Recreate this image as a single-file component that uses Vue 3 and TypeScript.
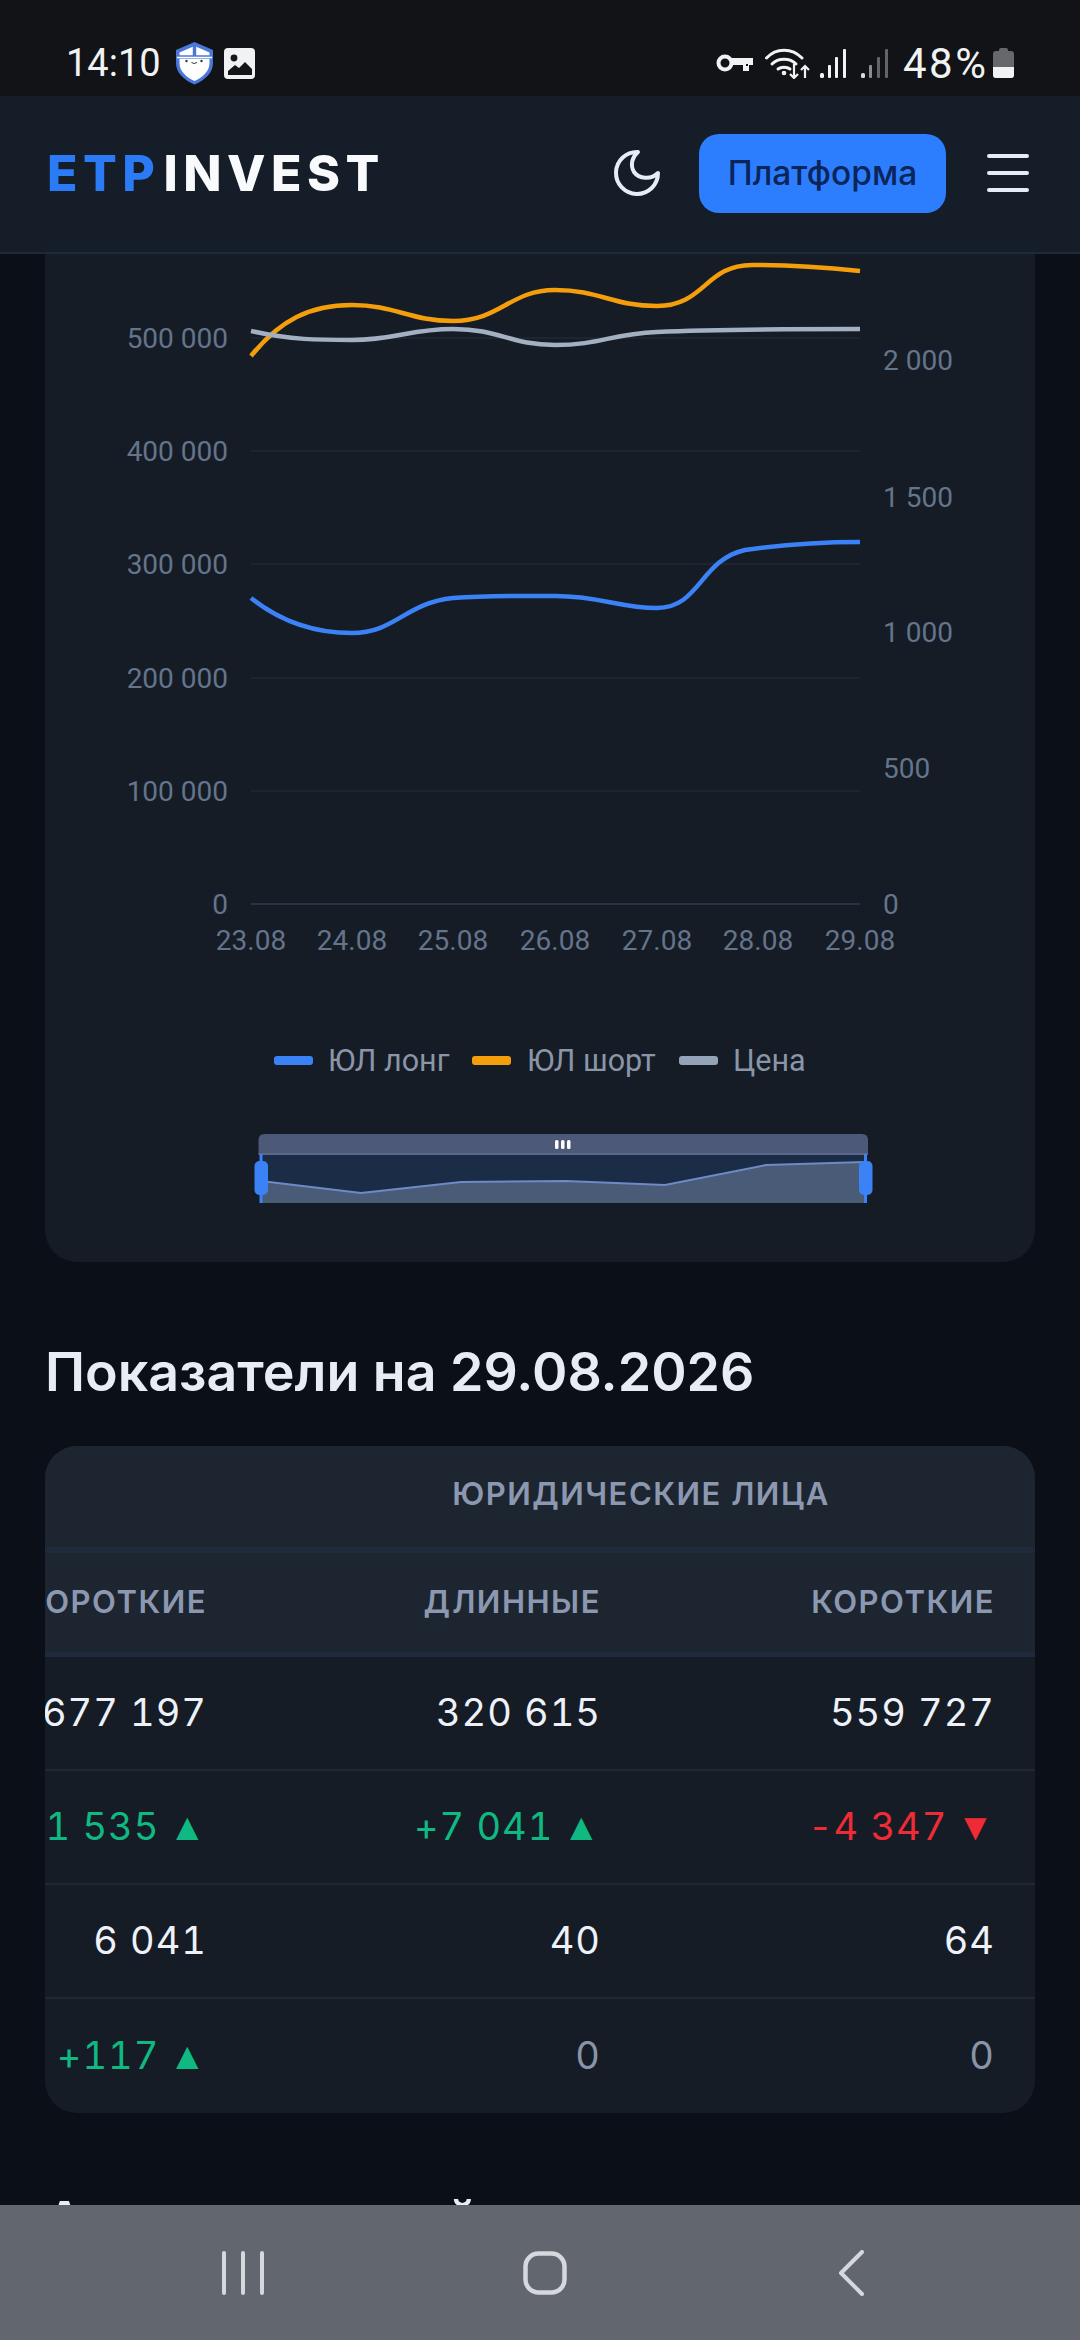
<script setup lang="ts">
interface Cell {
  text: string
  tone?: 'up' | 'down' | 'flat'
  arrow?: string
}

const leftTicks = [
  { y: 338, label: '500 000' },
  { y: 451, label: '400 000' },
  { y: 564, label: '300 000' },
  { y: 678, label: '200 000' },
  { y: 791, label: '100 000' },
  { y: 904, label: '0' }
]
const rightTicks = [
  { y: 360, label: '2 000' },
  { y: 497, label: '1 500' },
  { y: 632, label: '1 000' },
  { y: 768, label: '500' },
  { y: 904, label: '0' }
]
const dates = [
  { x: 251, label: '23.08' },
  { x: 352, label: '24.08' },
  { x: 453, label: '25.08' },
  { x: 555, label: '26.08' },
  { x: 657, label: '27.08' },
  { x: 758, label: '28.08' },
  { x: 860, label: '29.08' }
]
const legend = [
  { x: 274, textX: 328, color: '#3b82f6', label: 'ЮЛ лонг' },
  { x: 472, textX: 527, color: '#f59e0b', label: 'ЮЛ шорт' },
  { x: 679, textX: 733, color: '#94a3b8', label: 'Цена' }
]

const rows: Cell[][] = [
  [{ text: '677 197' }, { text: '320 615' }, { text: '559 727' }],
  [
    { text: '+1 535', tone: 'up', arrow: '▲' },
    { text: '+7 041', tone: 'up', arrow: '▲' },
    { text: '-4 347', tone: 'down', arrow: '▼' }
  ],
  [{ text: '6 041' }, { text: '40' }, { text: '64' }],
  [
    { text: '+117', tone: 'up', arrow: '▲' },
    { text: '0', tone: 'flat' },
    { text: '0', tone: 'flat' }
  ]
]
</script>

<template>
  <div class="screen">
    <div class="status-bar">
      <div class="status-left">
        <span class="status-text">14:10</span>
        <svg class="shield" width="39" height="44" viewBox="0 0 39 44">
          <path d="M19.5 1 L38 9 V22 C38 32 30 39 19.5 43.5 C9 39 1 32 1 22 V9 Z" fill="#4a78d8" />
          <path d="M19.5 5 L34.5 11.5 V22 C34.5 30 28 36 19.5 40 C11 36 4.5 30 4.5 22 V11.5 Z" fill="#fff" />
          <path d="M19.5 3 V16 M2 16 H37" stroke="#4a78d8" stroke-width="3.4" fill="none" />
          <path d="M2 16.5 H37" stroke="#fff" stroke-width="1.5" />
          <circle cx="11.5" cy="20" r="1.2" fill="#333" />
          <circle cx="26.5" cy="20" r="1.2" fill="#333" />
          <path d="M16.5 21.5 Q19 23.5 22 21.5" stroke="#333" stroke-width="1" fill="none" />
        </svg>
        <svg class="gallery" width="31" height="31" viewBox="0 0 31 31">
          <rect width="31" height="31" rx="4" fill="#f1f2f3" />
          <circle cx="10" cy="10" r="3.4" fill="#14161a" />
          <path d="M4 27 V23 L11 17 L15 20 L21 14 L28 21 V27 Z" fill="#14161a" />
        </svg>
      </div>
      <div class="status-right">
        <svg class="key" width="37" height="20" viewBox="0 0 37 20">
          <circle cx="9" cy="10" r="6.5" fill="none" stroke="#f1f2f3" stroke-width="4" />
          <path d="M15 5 H37 V12 H33 V18 H27 V12 H15 Z" fill="#f1f2f3" />
          <rect x="30" y="11" width="2" height="2" fill="#111317" />
        </svg>
        <svg class="wifi" width="45" height="32" viewBox="0 0 45 32">
          <path d="M1.5 11 C11 0.5 27 0.5 37 11" fill="none" stroke="#f1f2f3" stroke-width="3" stroke-linecap="round" />
          <path d="M7 17 C13 10.5 25 10.5 31 17" fill="none" stroke="#f1f2f3" stroke-width="3" stroke-linecap="round" />
          <path d="M13 22 C16 19.5 22 19.5 25 22" fill="none" stroke="#f1f2f3" stroke-width="3" stroke-linecap="round" />
          <circle cx="19" cy="26" r="2.3" fill="#f1f2f3" />
          <path d="M29 17 V31 M25 27 L29 31 L33 27 M40 31 V19 M36 23 L40 19 L44 23" fill="none" stroke="#f1f2f3" stroke-width="2.2" />
        </svg>
        <svg class="signal" width="26" height="29" viewBox="0 0 26 29">
          <rect x="0" y="24" width="4" height="5" rx="1.5" fill="#f1f2f3" />
          <rect x="8" y="16" width="3" height="13" rx="1" fill="#f1f2f3" />
          <rect x="15" y="8" width="3" height="21" rx="1" fill="#f1f2f3" />
          <rect x="23" y="0" width="3" height="29" rx="1" fill="#f1f2f3" />
        </svg>
        <svg class="signal second" width="27" height="29" viewBox="0 0 27 29">
          <rect x="0" y="24" width="4" height="5" rx="1.5" fill="#d8d9da" />
          <rect x="8" y="16" width="3" height="13" rx="1" fill="#8b8c8e" />
          <rect x="16" y="8" width="3" height="21" rx="1" fill="#636467" />
          <rect x="24" y="0" width="3" height="29" rx="1" fill="#636467" />
        </svg>
        <span class="status-text percent">48%</span>
        <svg class="battery" width="21" height="30" viewBox="0 0 21 30">
          <path d="M6 2 Q6 0 8 0 H13 Q15 0 15 2 V3 H18 Q21 3 21 6 V27 Q21 30 18 30 H3 Q0 30 0 27 V6 Q0 3 3 3 H6 Z" fill="#66686b" />
          <path d="M0 19 H21 V27 Q21 30 18 30 H3 Q0 30 0 27 Z" fill="#f1f2f3" />
        </svg>
      </div>
    </div>

    <header class="top-bar">
      <div class="logo"><span class="logo-accent">ETP</span><span>INVEST</span></div>
      <svg class="moon" width="48" height="48" viewBox="0 0 48 48">
        <path d="M25 3 A21 21 0 1 0 45 24 C38 31 26 30 21 23 C17 16 19 8 25 3 Z" fill="none" stroke="#e8edf5" stroke-width="4" stroke-linejoin="round" />
      </svg>
      <button class="platform-btn">Платформа</button>
      <div class="burger">
        <span></span>
        <span></span>
        <span></span>
      </div>
    </header>

    <main class="page">
      <section class="chart-card">
        <svg class="chart" width="990" height="1008" viewBox="45 254 990 1008">
          <line v-for="t in leftTicks" :key="t.y" x1="251" x2="860" :y1="t.y" :y2="t.y"
            :stroke="t.y === 904 ? '#2a3340' : '#1d2530'" stroke-width="2" />
          <text v-for="t in leftTicks" :key="t.label" x="228" :y="t.y + 10" text-anchor="end" class="axis">{{ t.label }}</text>
          <text v-for="t in rightTicks" :key="t.label" x="883" :y="t.y + 10" class="axis">{{ t.label }}</text>
          <text v-for="d in dates" :key="d.x" :x="d.x" y="950" text-anchor="middle" class="axis">{{ d.label }}</text>

          <path d="M251 356 C280 320 310 305 352 305 C395 305 410 321 453 321 C500 321 510 290 555 290 C600 290 612 306 657 306 C705 306 705 265 752 265 C790 265 830 268 860 271"
            fill="none" stroke="#f59e0b" stroke-width="4.5" />
          <path d="M251 331 C290 340 320 340 352 340 C395 340 410 329 453 329 C500 329 510 345 555 345 C600 345 610 334 657 332 C720 329 790 329 860 329"
            fill="none" stroke="#a3b0c2" stroke-width="4.5" />
          <path d="M251 598 C285 625 320 633 352 633 C395 633 405 603 453 598 C490 595 520 596 555 596 C600 596 620 608 657 608 C700 608 700 560 745 550 C780 545 820 542 860 542"
            fill="none" stroke="#3b82f6" stroke-width="4.5" />

          <g v-for="l in legend" :key="l.label">
            <rect :x="l.x" y="1056" width="39" height="9" rx="3" :fill="l.color" />
            <text :x="l.textX" y="1071" class="legend">{{ l.label }}</text>
          </g>

          <rect x="261" y="1154" width="604" height="49" fill="#1b2c47" />
          <path d="M261 1181 L361 1193 L461 1182 L566 1181 L665 1185 L766 1165 L865 1162 V1203 H261 Z" fill="#4a5b78" />
          <path d="M261 1181 L361 1193 L461 1182 L566 1181 L665 1185 L766 1165 L865 1162" fill="none" stroke="#6f8ac4" stroke-width="2" />
          <path d="M258.5 1154 V1140 Q258.5 1134 264.5 1134 H862 Q868 1134 868 1140 V1154 Z" fill="#4d5978" />
          <rect x="258.5" y="1153" width="609.5" height="2" fill="#5b678a" />
          <rect x="555" y="1140" width="3.5" height="9" rx="1.5" fill="#fff" />
          <rect x="561" y="1140" width="3.5" height="9" rx="1.5" fill="#fff" />
          <rect x="567" y="1140" width="3.5" height="9" rx="1.5" fill="#fff" />
          <rect x="259.5" y="1154" width="3" height="49" fill="#3b82f6" />
          <rect x="864" y="1154" width="3" height="49" fill="#3b82f6" />
          <rect x="254.5" y="1161" width="13.5" height="34" rx="5" fill="#3b82f6" />
          <rect x="859" y="1161" width="13.5" height="34" rx="5" fill="#3b82f6" />
        </svg>
      </section>

      <h2 class="section-title first">Показатели на 29.08.2026</h2>

      <section class="table-card">
        <div class="table-track">
          <div class="thead-row group-row">
            <div></div>
            <div class="group-cell">Юридические лица</div>
          </div>
          <div class="thead-row sub-row">
            <div class="head-cell">Короткие</div>
            <div class="head-cell">Длинные</div>
            <div class="head-cell">Короткие</div>
          </div>
          <div v-for="(row, i) in rows" :key="i" class="data-row">
            <div v-for="(cell, j) in row" :key="j" class="data-cell" :class="cell.tone">
              {{ cell.text }}<span v-if="cell.arrow" class="arrow">{{ cell.arrow }}</span>
            </div>
          </div>
        </div>
      </section>

      <h2 class="section-title">Анализ позиций</h2>
    </main>

    <nav class="nav-bar">
      <svg class="nav-recent" width="42" height="44" viewBox="0 0 42 44">
        <path d="M2 2 V42 M21 2 V42 M40 2 V42" stroke="#d5d8dd" stroke-width="4" stroke-linecap="round" fill="none" />
      </svg>
      <svg class="nav-home" width="44" height="44" viewBox="0 0 44 44">
        <rect x="2.5" y="2.5" width="39" height="39" rx="13" fill="none" stroke="#d5d8dd" stroke-width="4.5" />
      </svg>
      <svg class="nav-back" width="26" height="46" viewBox="0 0 26 46">
        <path d="M24 2 L3 23 L24 44" stroke="#d5d8dd" stroke-width="4" stroke-linecap="round" stroke-linejoin="round" fill="none" />
      </svg>
    </nav>
  </div>
</template>

<style scoped>
.screen {
  width: 1080px;
  height: 2340px;
  display: flex;
  flex-direction: column;
  overflow: hidden;
  background: #0b0f17;
  font-family: Inter, "Noto Sans", sans-serif;
}

.status-bar {
  height: 96px;
  flex: none;
  box-sizing: border-box;
  padding: 30px 66px 0 66px;
  display: flex;
  align-items: center;
  justify-content: space-between;
  background: #111317;
}

.status-left,
.status-right {
  display: flex;
  align-items: center;
}

.status-text {
  font-family: Roboto, sans-serif;
  font-size: 38px;
  color: #f1f2f3;
}

.shield {
  margin-left: 14px;
}

.gallery {
  margin-left: 10px;
}

.wifi {
  margin-left: 12px;
}

.signal {
  margin-left: 10px;
}

.signal.second {
  margin-left: 15px;
}

.percent {
  width: 83px;
  margin-left: 15px;
  font-size: 42px;
  letter-spacing: 2.5px;
  white-space: nowrap;
}

.battery {
  margin-left: 7px;
}

.top-bar {
  height: 158px;
  flex: none;
  box-sizing: border-box;
  padding: 0 51px 2px 47px;
  display: flex;
  align-items: center;
  background: #151d28;
  border-bottom: 2px solid #1e293b;
}

.logo {
  font-size: 50px;
  font-weight: 800;
  letter-spacing: 5.5px;
  color: #f8fafc;
}

.logo-accent {
  color: #2b7bf6;
  margin-right: 3px;
}

.moon {
  margin-left: auto;
}

.platform-btn {
  width: 247px;
  height: 79px;
  margin-left: 38px;
  border: none;
  border-radius: 20px;
  background: #2d7dff;
  color: #0a2559;
  font-family: Inter, sans-serif;
  font-size: 33.5px;
  font-weight: 500;
}

.burger {
  width: 42px;
  margin-left: 41px;
  display: flex;
  flex-direction: column;
  gap: 12.5px;
}

.burger span {
  height: 4.5px;
  border-radius: 3px;
  background: #e6ecf5;
}

.page {
  flex: 1;
  min-height: 0;
  overflow: hidden;
  box-sizing: border-box;
  padding: 0 45px;
}

.chart-card {
  height: 1008px;
  background: #151c26;
  border-radius: 0 0 32px 32px;
}

.chart {
  display: block;
}

.axis {
  font-family: Roboto, sans-serif;
  font-size: 28px;
  fill: #64748b;
}

.legend {
  font-family: Roboto, sans-serif;
  font-size: 30.5px;
  fill: #8a96a8;
}

.section-title {
  margin: 0;
  font-size: 53.7px;
  font-weight: 600;
  line-height: 60px;
  color: #e8edf5;
}

.section-title.first {
  margin-top: 80px;
  margin-bottom: 44px;
}

.table-card {
  height: 667px;
  margin-bottom: 78px;
  border-radius: 32px;
  overflow: hidden;
  background: #151c26;
}

.table-track {
  width: 1182px;
  margin-left: -192px;
}

.thead-row,
.data-row {
  display: grid;
  grid-template-columns: repeat(3, 394px);
}

.thead-row {
  background: #1d2531;
  align-items: center;
  box-sizing: border-box;
  font-size: 31px;
  font-weight: 600;
  letter-spacing: 1.5px;
  text-transform: uppercase;
  color: #8c98b0;
}

.group-row {
  height: 107px;
  padding-bottom: 6px;
  border-bottom: 6px solid #1f2b3c;
}

.group-cell {
  grid-column: span 2;
  text-align: center;
}

.sub-row {
  height: 104px;
  padding-bottom: 2px;
  border-bottom: 5px solid #1f2b3c;
}

.head-cell,
.data-cell {
  text-align: right;
  padding-right: 40px;
}

.data-row {
  height: 114px;
  align-items: center;
  box-sizing: border-box;
  padding-bottom: 3px;
  border-bottom: 2px solid #1f2733;
  font-size: 38px;
  font-variant-numeric: tabular-nums;
  letter-spacing: 1px;
  color: #eef2f8;
}

.data-row:last-child {
  border-bottom: none;
}

.data-cell.up {
  color: #10b981;
}

.data-cell.down {
  color: #ef2b36;
}

.data-cell.flat {
  color: #8a94a8;
}

.arrow {
  margin-left: 9px;
  font-family: "Liberation Sans", sans-serif;
  font-size: 38px;
  line-height: 1;
}

.nav-bar {
  height: 135px;
  flex: none;
  display: flex;
  align-items: center;
  background: #61666f;
}

.nav-recent {
  margin-left: 222px;
}

.nav-home {
  margin-left: 259px;
}

.nav-back {
  margin-left: 271px;
}
</style>

<style>
html,
body {
  background: #0b0f17;
}
</style>
